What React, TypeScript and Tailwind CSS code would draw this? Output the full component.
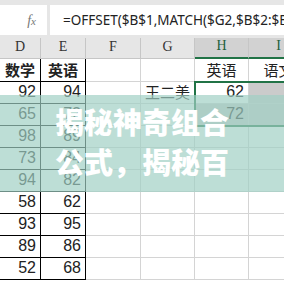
import React from "react";

const cols = ["D", "E", "F", "G", "H", "I"];

const rows: string[][] = [
  ["数学", "英语", "", "", "英语", "语文"],
  ["92", "94", "", "王二美", "62", ""],
  ["65", "72", "", "", "72", ""],
  ["98", "89", "", "", "", ""],
  ["73", "84", "", "", "", ""],
  ["94", "82", "", "", "", ""],
  ["58", "62", "", "", "", ""],
  ["93", "95", "", "", "", ""],
  ["89", "86", "", "", "", ""],
  ["52", "68", "", "", "", ""],
];

const cjk = "font-['Noto_Sans_CJK_SC',sans-serif]";
const num = "font-['Liberation_Sans','Noto_Sans_CJK_SC',sans-serif]";

function Cell({ value, r, c }: { value: string; r: number; c: number }) {
  const inTable = c < 2;
  const isText = r === 0 || c === 3;
  const border = inTable
    ? "border-r border-b border-black"
    : "border-r border-b border-[#d4d4d4]";
  const shaded = (r === 1 && c === 5) || (r === 2 && c >= 4);
  const align =
    r === 0 ? "justify-center" : "justify-end pr-[4px]";
  return (
    <div
      className={`${border} ${align} ${shaded ? "bg-[#cbcbcb]" : "bg-white"} flex items-end pb-[1px] leading-[20px] overflow-hidden whitespace-nowrap text-[#222] ${
        isText ? `${cjk} text-[15px]` : `${num} text-[16px]`
      } ${r === 0 && inTable ? "font-bold" : ""} ${r === 0 ? "h-[23px]" : "h-[22px]"}`}
    >
      {value}
    </div>
  );
}

export default function App() {
  return (
    <div className="relative w-[284px] h-[284px] overflow-hidden bg-white">
      {/* formula bar */}
      <div className="h-[38px] bg-[#e6e6e6] pt-[5px] pb-[3px] flex gap-[3px]">
        <div className="w-[47px] bg-white flex items-center justify-end pr-[11px]">
          <span className="font-['Liberation_Serif',serif] italic text-[14px] text-[#777]">
            f<span className="text-[11px]">x</span>
          </span>
        </div>
        <div className="flex-1 bg-white flex items-center pl-[13px] whitespace-nowrap overflow-hidden font-['Noto_Sans','Noto_Sans_CJK_SC',sans-serif] text-[13.5px] text-[#222]">
          =OFFSET($B$1,MATCH($G2,$B$2:$B$11,0),MATCH(H$1,$C$1:$E$1,0))
        </div>
      </div>

      {/* sheet */}
      <div className="grid grid-cols-[41px_45px_55px_54px_54px_60px]">
        {cols.map((c, i) => (
          <div
            key={c}
            className={`h-[21px] flex items-end pb-[1px] justify-center border-r border-[#c6c6c6] font-['Liberation_Serif',serif] text-[14px] ${
              i >= 4
                ? "bg-[#d2d2d2] text-[#1e5f3c] border-b-2 border-b-[#217346]"
                : "bg-[#e6e6e6] text-[#333] border-b border-b-[#c6c6c6]"
            }`}
          >
            {c}
          </div>
        ))}
        {rows.map((row, r) =>
          row.map((v, c) => <Cell key={`${r}-${c}`} value={v} r={r} c={c} />)
        )}
      </div>

      {/* selection */}
      <div className="absolute left-[194px] top-[81px] w-[100px] h-[46px] border-2 border-[#217346]" />

      {/* title band */}
      <div className="absolute left-0 right-0 top-[95px] h-[97px] bg-[rgba(160,207,195,0.69)] pt-[6px] pl-[55px]">
        <div className={`${cjk} font-black text-white text-[29px] leading-[40px] w-[180px]`}>
          揭秘神奇组合公式，揭秘百
        </div>
      </div>
    </div>
  );
}
